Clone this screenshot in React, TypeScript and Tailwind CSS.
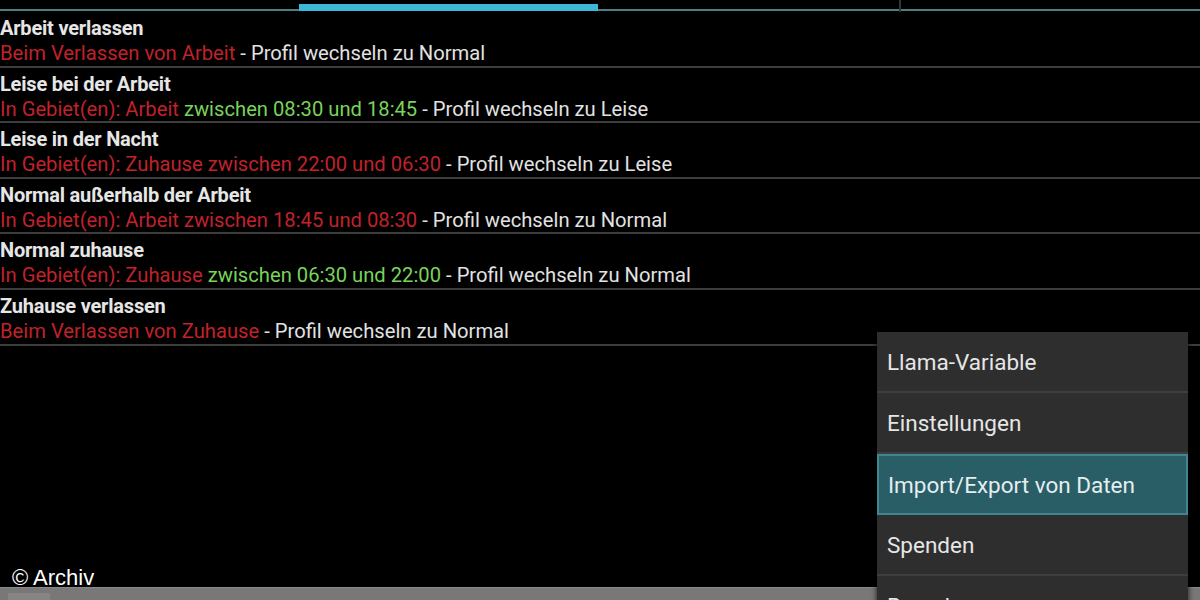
import React from "react";

type Part = { t: string; c: "r" | "g" | "w" };
const rows: { title: string; parts: Part[] }[] = [
  { title: "Arbeit verlassen", parts: [{ t: "Beim Verlassen von Arbeit", c: "r" }, { t: " - Profil wechseln zu Normal", c: "w" }] },
  { title: "Leise bei der Arbeit", parts: [{ t: "In Gebiet(en): Arbeit", c: "r" }, { t: " zwischen 08:30 und 18:45", c: "g" }, { t: " - Profil wechseln zu Leise", c: "w" }] },
  { title: "Leise in der Nacht", parts: [{ t: "In Gebiet(en): Zuhause zwischen 22:00 und 06:30", c: "r" }, { t: " - Profil wechseln zu Leise", c: "w" }] },
  { title: "Normal außerhalb der Arbeit", parts: [{ t: "In Gebiet(en): Arbeit zwischen 18:45 und 08:30", c: "r" }, { t: " - Profil wechseln zu Normal", c: "w" }] },
  { title: "Normal zuhause", parts: [{ t: "In Gebiet(en): Zuhause", c: "r" }, { t: " zwischen 06:30 und 22:00", c: "g" }, { t: " - Profil wechseln zu Normal", c: "w" }] },
  { title: "Zuhause verlassen", parts: [{ t: "Beim Verlassen von Zuhause", c: "r" }, { t: " - Profil wechseln zu Normal", c: "w" }] },
];

const colorClass = { r: "text-[#c0222b]", g: "text-[#78d45a]", w: "text-[#e2e2e2]" };

const menu = ["Llama-Variable", "Einstellungen", "Import/Export von Daten", "Spenden", "Beenden"];

export default function App() {
  return (
    <div className="relative w-[1200px] h-[600px] overflow-hidden bg-black flex flex-col" style={{ fontFamily: "Roboto, 'Noto Sans', sans-serif" }}>
      {/* tab indicator */}
      <div className="relative h-[12px] shrink-0">
        <div className="absolute left-0 right-0 top-[9px] h-[2px] bg-[#4f7f82]" />
        <div className="absolute left-[299px] w-[299px] top-[4px] h-[7px] bg-[#3cb7d6]" />
        <div className="absolute left-[899px] w-[2px] top-0 h-[12px] bg-[#2a3a3a]" />
      </div>
      <div className="flex flex-col flex-1">
        {rows.map((r, i) => (
          <div key={i} className="h-[55.6px] box-border border-b-2 border-[#3e3e3e] pt-[4px] flex flex-col">
            <div className="text-[20px] leading-[24px] font-bold text-[#e6e6e6] tracking-[-0.2px]">{r.title}</div>
            <div className="text-[20.2px] leading-[27px] whitespace-nowrap">
              {r.parts.map((p, j) => (
                <span key={j} className={colorClass[p.c]}>{p.t}</span>
              ))}
            </div>
          </div>
        ))}
      </div>
      <div className="relative h-[13px] shrink-0 bg-[#787878] border-t border-[#8a8a8a]">
        <div className="absolute left-[8px] top-[5px] w-[42px] h-[8px] bg-[#858585]" />
      </div>

      <div
        className="absolute left-[12px] top-[564px] text-[22px] leading-[28px] text-white"
        style={{ fontFamily: "'Liberation Sans', Arial, sans-serif", textShadow: "0 0 2px #000, 1px 1px 2px #000" }}
      >
        © Archiv
      </div>

      {/* overflow menu */}
      <div className="absolute left-[877px] top-[332px] w-[311px] bg-[#2e2e2e] shadow-[0_0_6px_rgba(0,0,0,0.8)] flex flex-col">
        {menu.map((m, i) => (
          <div
            key={i}
            className={
              i === 2
                ? "h-[61px] box-border px-[9px] pt-[3px] flex items-center text-[22.5px] text-[#e4eef0] bg-[#2a5e67] border-2 border-[#3f8690]"
                : "h-[61px] box-border px-[10px] pt-[3px] flex items-center text-[22.5px] text-[#e6e6e6] border-b-2 border-[#3e3e3e]"
            }
          >
            {m}
          </div>
        ))}
      </div>
    </div>
  );
}
